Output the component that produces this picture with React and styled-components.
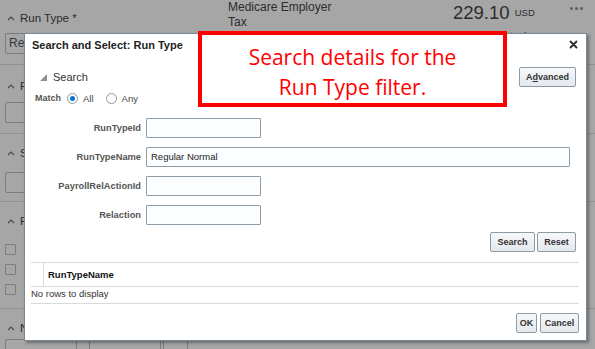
import React from 'react';
import styled, { createGlobalStyle } from 'styled-components';

const GlobalStyle = createGlobalStyle`
  html, body {
    margin: 0;
    padding: 0;
  }
  body {
    background: #a6a6a6;
    font-family: "Liberation Sans", Arial, sans-serif;
  }
`;

const fields = [
  { label: 'RunTypeId', value: '', wide: false },
  { label: 'RunTypeName', value: 'Regular Normal', wide: true },
  { label: 'PayrollRelActionId', value: '', wide: false },
  { label: 'Relaction', value: '', wide: false },
];

// Icons ============

const ChevronUp = () => (
  <svg width="8" height="6" viewBox="0 0 8 6">
    <polyline points="1,5 4,2 7,5" fill="none" stroke="#4a4a4a" strokeWidth="1.2" />
  </svg>
);

const CloseIcon = () => (
  <svg width="9" height="9" viewBox="0 0 9 9">
    <path d="M1.5 1.5 L7.5 7.5 M7.5 1.5 L1.5 7.5" stroke="#2b2b2b" strokeWidth="1.8" strokeLinecap="round" />
  </svg>
);

// HTML ============

export default function App() {
  return (
    <Page>
      <GlobalStyle />

      <Header>
        <HeaderLeft>
          <SectionTitle><ChevronUp /> Run Type *</SectionTitle>
          <BgInput $width={210}>Re</BgInput>
        </HeaderLeft>
        <HeaderMiddle>Medicare Employer<br />Tax</HeaderMiddle>
        <HeaderAmount>
          <Amount>229.10 <Currency>USD</Currency></Amount>
          <AmountNote>Estimated</AmountNote>
        </HeaderAmount>
        <Dots><Dot /><Dot /><Dot /></Dots>
      </Header>

      <Section $top={14} $bottom={10}>
        <SectionTitle><ChevronUp /> F</SectionTitle>
        <BgInput $width={200} $mt={9} />
      </Section>
      <Section $top={12} $bottom={8}>
        <SectionTitle><ChevronUp /> S</SectionTitle>
        <BgInput $width={200} $mt={12} />
      </Section>
      <Section $top={12} $bottom={13}>
        <SectionTitle><ChevronUp /> F</SectionTitle>
        <Checks>
          <BgCheck /><BgCheck /><BgCheck />
        </Checks>
      </Section>
      <Section $top={12} $bottom={0} $last>
        <SectionTitle><ChevronUp /> N</SectionTitle>
        <BoxRow>
          <BgBox $width={70} />
          <BgBox $width={70} $ml={12} />
          <BgBox $width={23} $ml={2} />
        </BoxRow>
      </Section>

      <Dialog>
        <TitleBar>
          <DialogTitle>Search and Select: Run Type</DialogTitle>
          <CloseButton><CloseIcon /></CloseButton>
        </TitleBar>

        <SearchHeader>
          <Toggle><Triangle />Search</Toggle>
          <Button $width={57}>A<u>d</u>vanced</Button>
        </SearchHeader>

        <MatchRow>
          <MatchLabel>Match</MatchLabel>
          <Radio $checked />
          <RadioText>All</RadioText>
          <Radio />
          <RadioText>Any</RadioText>
        </MatchRow>

        <Form>
          {fields.map((f) => (
            <React.Fragment key={f.label}>
              <Label>{f.label}</Label>
              <Input $wide={f.wide}>{f.value}</Input>
            </React.Fragment>
          ))}
        </Form>

        <ButtonRow $mt={7} $right={10}>
          <Button $width={45}>Search</Button>
          <Button $width={39}>Reset</Button>
        </ButtonRow>

        <Table>
          <HeadRow>
            <HeadSpacer />
            <HeadCell>RunTypeName</HeadCell>
          </HeadRow>
          <EmptyRow>No rows to display</EmptyRow>
        </Table>

        <ButtonRow $mt={9} $right={7} $gap={3}>
          <Button $width={21}>OK</Button>
          <Button $width={39}>Cancel</Button>
        </ButtonRow>
      </Dialog>

      <Callout>
        Search details for the<br />Run Type filter.
      </Callout>
    </Page>
  );
}

// Styled ============

const Page = styled.div`
  position: relative;
  width: 595px;
  height: 349px;
  overflow: hidden;
  background: #a6a6a6;
  color: #2c2c2c;
`;

const Header = styled.div`
  display: flex;
  height: 65px;
  border-bottom: 1px solid #929292;
  box-sizing: border-box;
`;

const HeaderLeft = styled.div`
  width: 228px;
  padding: 11px 0 0 5px;
  box-sizing: border-box;
`;

const HeaderMiddle = styled.div`
  width: 225px;
  font-size: 12px;
  line-height: 15px;
  color: #2c2c2c;
`;

const HeaderAmount = styled.div`
  width: 117px;
  padding-top: 3px;
`;

const Amount = styled.div`
  font-size: 18.5px;
  line-height: 20px;
  color: #2c2c2c;
`;

const Currency = styled.span`
  font-size: 9.5px;
  vertical-align: 3px;
`;

const AmountNote = styled.div`
  font-size: 12px;
  line-height: 14px;
  margin-top: 7px;
  padding-left: 20px;
`;

const Dots = styled.div`
  display: flex;
  gap: 2px;
  padding-top: 7px;
`;

const Dot = styled.span`
  width: 3px;
  height: 3px;
  border-radius: 50%;
  background: #5f5f5f;
`;

const Section = styled.div`
  padding: ${(p) => p.$top}px 0 ${(p) => p.$bottom}px 5px;
  border-bottom: ${(p) => (p.$last ? 'none' : '1px solid #929292')};
`;

const SectionTitle = styled.div`
  display: flex;
  align-items: center;
  gap: 5px;
  height: 14px;
  padding-left: 2px;
  font-size: 11.5px;
  color: #2c2c2c;
`;

const BgInput = styled.div`
  width: ${(p) => p.$width}px;
  height: 21px;
  margin-top: ${(p) => p.$mt || 8}px;
  border: 1px solid #7c7c7c;
  border-radius: 2px;
  box-sizing: border-box;
  padding-left: 3px;
  font-size: 12px;
  line-height: 19px;
  color: #3a3a3a;
`;

const Checks = styled.div`
  display: flex;
  flex-direction: column;
  gap: 9px;
  margin-top: 16px;
`;

const BgCheck = styled.div`
  width: 11px;
  height: 11px;
  border: 1px solid #7c7c7c;
  border-radius: 1px;
  box-sizing: border-box;
`;

const BoxRow = styled.div`
  display: flex;
  margin-top: 4px;
`;

const BgBox = styled.div`
  width: ${(p) => p.$width}px;
  height: 20px;
  margin-left: ${(p) => p.$ml || 0}px;
  border: 1px solid #7c7c7c;
  border-radius: 2px;
`;

const Dialog = styled.div`
  position: absolute;
  left: 24px;
  top: 33px;
  width: 563px;
  height: 308px;
  box-sizing: border-box;
  background: #fff;
  border: 1px solid #7a8894;
  box-shadow: 2px 2px 3px rgba(0, 0, 0, 0.35);
  display: flex;
  flex-direction: column;
`;

const TitleBar = styled.div`
  display: flex;
  align-items: center;
  justify-content: space-between;
  height: 22px;
  padding: 0 8px 0 7px;
`;

const DialogTitle = styled.div`
  font-size: 11px;
  font-weight: bold;
  color: #222;
`;

const CloseButton = styled.div`
  display: flex;
  align-items: center;
  margin-top: -1px;
`;

const SearchHeader = styled.div`
  display: flex;
  align-items: center;
  justify-content: space-between;
  height: 20px;
  margin-top: 11px;
  padding: 0 10px 0 15px;
`;

const Toggle = styled.div`
  display: flex;
  align-items: center;
  font-size: 11px;
  color: #333;
`;

const Triangle = styled.span`
  width: 0;
  height: 0;
  border-left: 7px solid transparent;
  border-bottom: 7px solid #8f8f8f;
  margin-right: 6px;
`;

const MatchRow = styled.div`
  display: flex;
  align-items: center;
  height: 14px;
  margin-top: 4px;
  padding-left: 10px;
`;

const MatchLabel = styled.span`
  font-size: 9px;
  font-weight: bold;
  color: #555;
  margin-right: 6px;
`;

const Radio = styled.span`
  position: relative;
  width: 11px;
  height: 11px;
  border: 1px solid #8d9ba7;
  border-radius: 50%;
  box-sizing: border-box;
  background: #fcfdfe;
  margin-right: 5px;
  &::after {
    content: '';
    display: ${(p) => (p.$checked ? 'block' : 'none')};
    position: absolute;
    left: 2px;
    top: 2px;
    width: 5px;
    height: 5px;
    border-radius: 50%;
    background: #0a72d0;
  }
`;

const RadioText = styled.span`
  font-size: 9.5px;
  color: #444;
  margin-right: 12px;
`;

const Form = styled.div`
  display: grid;
  grid-template-columns: 116px 1fr;
  column-gap: 5px;
  row-gap: 9px;
  margin-top: 13px;
  align-items: center;
`;

const Label = styled.div`
  text-align: right;
  font-size: 9.3px;
  font-weight: bold;
  color: #555;
`;

const Input = styled.div`
  width: ${(p) => (p.$wide ? 424 : 115)}px;
  height: 20px;
  box-sizing: border-box;
  border: 1px solid #8d9ba7;
  border-radius: 1px;
  background: #fbfdfe;
  padding-left: 4px;
  font-size: 9.5px;
  line-height: 18px;
  color: #222;
`;

const ButtonRow = styled.div`
  display: flex;
  justify-content: flex-end;
  gap: ${(p) => p.$gap || 2}px;
  margin-top: ${(p) => p.$mt}px;
  padding-right: ${(p) => p.$right}px;
`;

const Button = styled.div`
  width: ${(p) => p.$width}px;
  height: 20px;
  box-sizing: border-box;
  border: 1px solid #8d9ba7;
  border-radius: 2px;
  background: linear-gradient(#f7f8fa, #e4e8ec);
  font-size: 9px;
  font-weight: bold;
  color: #333;
  display: flex;
  align-items: center;
  justify-content: center;
`;

const Table = styled.div`
  margin: 10px 7px 0 6px;
`;

const HeadRow = styled.div`
  display: flex;
  height: 25px;
  box-sizing: border-box;
  border-top: 1px solid #d4dbe1;
  border-bottom: 1px solid #d4dbe1;
`;

const HeadSpacer = styled.div`
  width: 12px;
  border-right: 1px solid #d4dbe1;
`;

const HeadCell = styled.div`
  display: flex;
  align-items: center;
  padding-left: 4px;
  font-size: 9.5px;
  font-weight: bold;
  color: #111;
`;

const EmptyRow = styled.div`
  height: 17px;
  box-sizing: border-box;
  border-bottom: 1px solid #d4dbe1;
  font-size: 9.5px;
  line-height: 14px;
  color: #333;
`;

const Callout = styled.div`
  position: absolute;
  left: 198px;
  top: 31px;
  width: 309px;
  height: 76px;
  box-sizing: border-box;
  border: 4px solid #ff0000;
  background: #fff;
  padding-top: 7px;
  text-align: center;
  font-family: "Open Sans", "Noto Sans", sans-serif;
  font-size: 21px;
  line-height: 30px;
  color: #ff0000;
`;
